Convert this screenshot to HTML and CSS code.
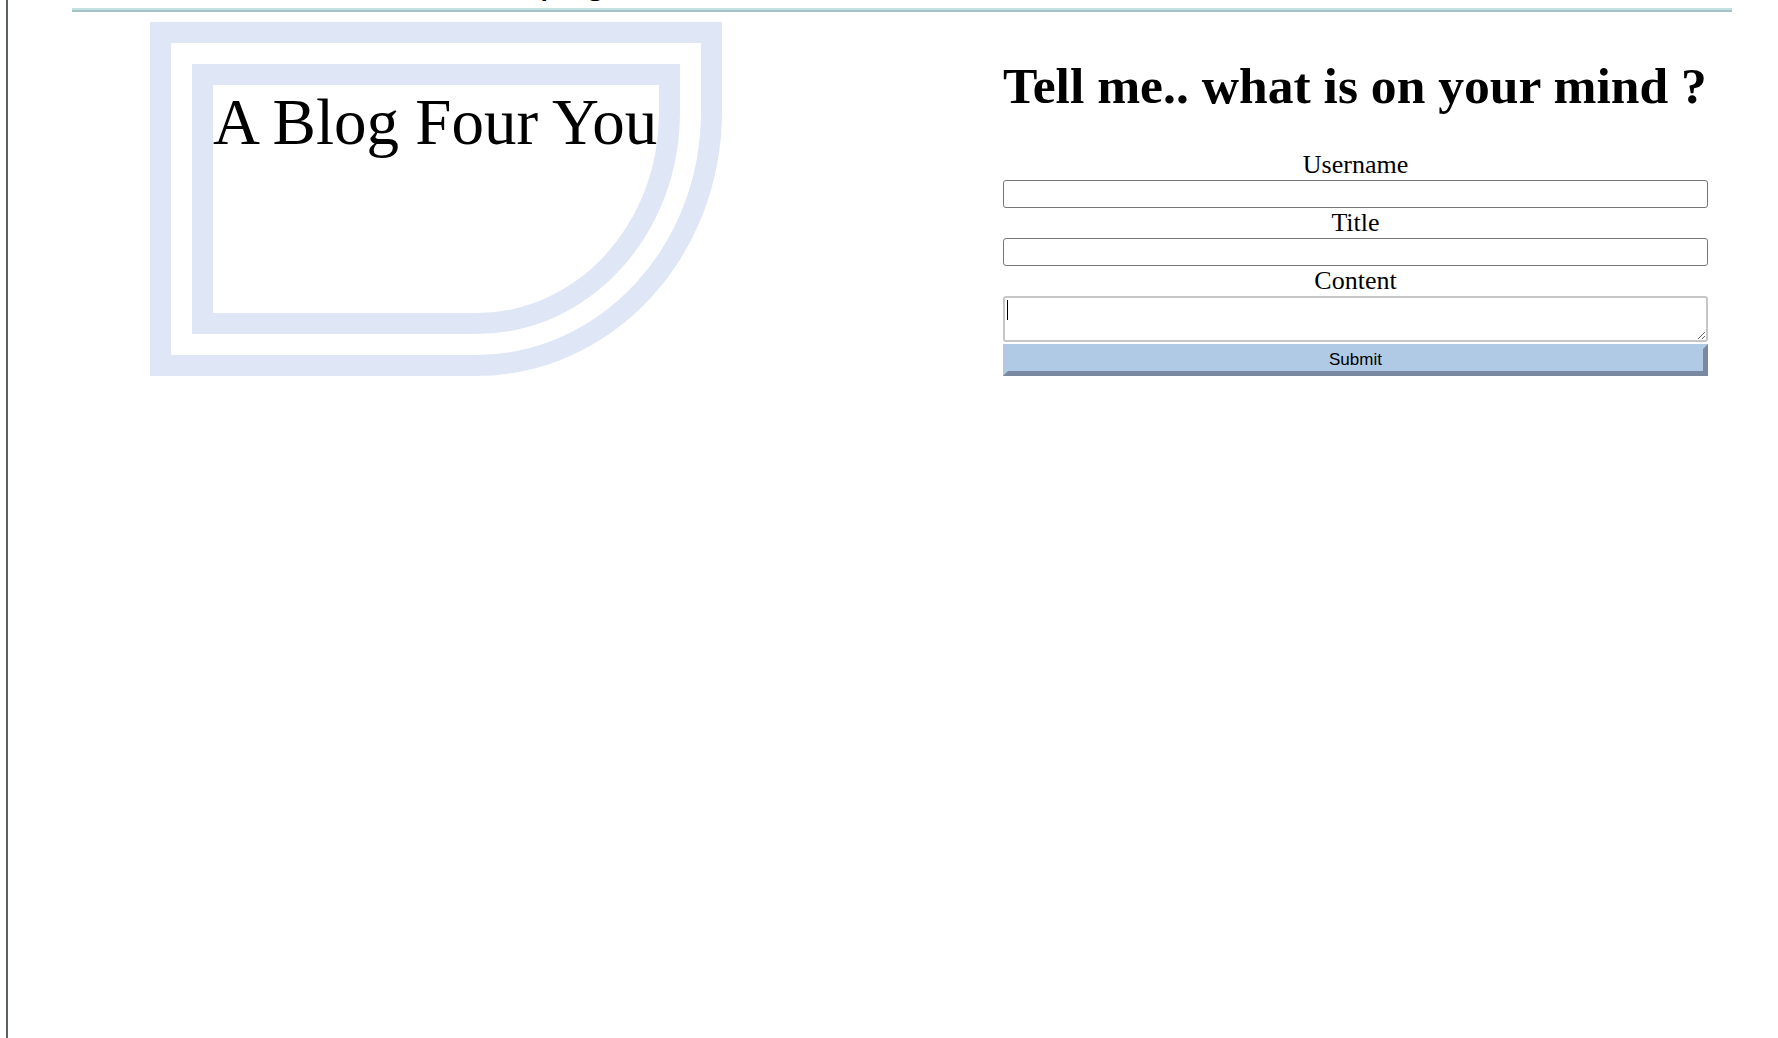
FILE: index.html
```html
<!DOCTYPE html>
<html lang="en">
<head>
<meta charset="utf-8">
<title>A Blog Four You</title>
<link rel="stylesheet" href="styles.css">
</head>
<body>
<div class="frame">
  <nav class="nav"><a class="nav-link" href="#">Homepage</a></nav>
  <div class="rule"></div>
  <main class="main">
    <div class="logo">
      <div class="logo-band">
        <div class="logo-inner">
          <h1 class="logo-title">A Blog Four You</h1>
        </div>
      </div>
    </div>
    <section class="post">
      <h2 class="post-heading">Tell me.. what is on your mind ?</h2>
      <form class="post-form">
        <label class="field-label" for="username">Username</label>
        <input class="field-input" id="username" type="text">
        <label class="field-label" for="title">Title</label>
        <input class="field-input" id="title" type="text">
        <label class="field-label" for="content">Content</label>
        <div class="area-wrap">
          <textarea class="field-area" id="content"></textarea>
          <span class="caret"></span>
        </div>
        <button class="submit" type="button">Submit</button>
      </form>
    </section>
  </main>
</div>
</body>
</html>
```
FILE: styles.css
```css
html, body {
  margin: 0;
  padding: 0;
  background: #ffffff;
}

body {
  font-family: "Liberation Serif", "Times New Roman", serif;
  color: #000;
  overflow: hidden;
}

.frame {
  display: flow-root;
  margin-left: 6px;
  border-left: 2px solid #5b6064;
  min-height: 100vh;
}

.nav {
  margin: -44px 46px 0 64px;
  padding: 0 0 6px 361px;
  line-height: 46px;
  font-family: "Liberation Sans", Arial, sans-serif;
  font-size: 40px;
}

.nav-link {
  color: #000;
  text-decoration: none;
}

.rule {
  margin: 0 46px 0 64px;
  height: 0;
  border-top: 2px solid #c2e2e2;
  border-bottom: 2px solid #a5c2c5;
}

.main {
  margin: 10px 46px 0 64px;
  padding: 0 24px 0 78px;
  display: flex;
  justify-content: space-between;
  align-items: flex-start;
}

.logo {
  border: 21px solid #dfe7f7;
  padding: 21px;
  border-bottom-right-radius: 246px 264px;
}

.logo-band {
  border: 21px solid #dfe7f7;
  border-bottom-right-radius: 203px 221px;
}

.logo-inner {
  width: 446px;
  height: 228px;
}

.logo-title {
  margin: 0;
  font-weight: normal;
  font-size: 65px;
  line-height: 74px;
  white-space: nowrap;
}

.post {
  width: 705px;
}

.post-heading {
  margin: 34px 0 34px;
  font-size: 51.6px;
  line-height: 60px;
  font-weight: bold;
  white-space: nowrap;
}

.post-form {
  display: flex;
  flex-direction: column;
}

.field-label {
  display: block;
  text-align: center;
  font-size: 26px;
  line-height: 30px;
}

.field-input {
  display: block;
  box-sizing: border-box;
  width: 100%;
  height: 28px;
  margin: 0;
  border: 1px solid #767676;
  border-radius: 3px;
  background: #fff;
}

.area-wrap {
  position: relative;
  margin-bottom: 2px;
}

.field-area {
  display: block;
  box-sizing: border-box;
  width: 100%;
  height: 46px;
  margin: 0;
  border: 2px solid #c6c6c6;
  border-radius: 3px;
  background: #fff;
}

.caret {
  position: absolute;
  left: 4px;
  top: 4px;
  width: 1px;
  height: 20px;
  background: #000;
}

.submit {
  box-sizing: border-box;
  width: 100%;
  height: 32px;
  margin: 0;
  padding: 0;
  background: #b0cae6;
  border-style: solid;
  border-width: 5px;
  border-color: #b0cae6 #7889a1 #7889a1 #b0cae6;
  font-family: "Liberation Sans", Arial, sans-serif;
  font-size: 17px;
  color: #000;
}
```
